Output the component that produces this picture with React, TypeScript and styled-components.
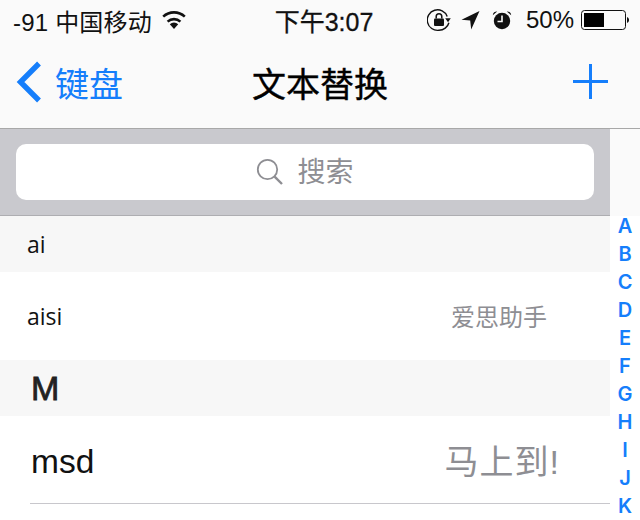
import React from 'react';
import styled, { createGlobalStyle } from 'styled-components';

const GlobalStyle = createGlobalStyle`
  html, body {
    margin: 0;
    padding: 0;
    background: #fff;
    overflow: hidden;
  }
  * {
    box-sizing: border-box;
  }
`;

const FONT = `"Liberation Sans", "Noto Sans CJK SC", sans-serif`;
const BLUE = '#157efb';

const Page = styled.div`
  width: 640px;
  height: 520px;
  overflow: hidden;
  font-family: ${FONT};
  background: #fff;
`;

const Header = styled.header`
  height: 129px;
  background: #fafafa;
  border-bottom: 1px solid #a8a8a8;
`;

const StatusBar = styled.div`
  height: 40px;
  padding: 0 11px 0 13px;
  display: grid;
  grid-template-columns: 1fr auto 1fr;
  align-items: center;
  font-size: 24px;
  color: #111;
`;

const StatusLeft = styled.div`
  display: flex;
  align-items: center;
  gap: 9px;
  letter-spacing: 0.2px;
`;

const StatusTime = styled.div`
  font-size: 25px;
  margin-left: 6px;
  -webkit-text-stroke: 0.3px #111;
`;

const StatusRight = styled.div`
  display: flex;
  align-items: center;
  justify-content: flex-end;
`;

const StatusIcon = styled.svg<{ $gap: number }>`
  display: block;
  margin-right: ${props => props.$gap}px;
`;

const Percent = styled.span`
  margin-right: 7px;
`;

const NavBar = styled.div`
  height: 88px;
  padding: 0 32px 4px 32px;
  display: grid;
  grid-template-columns: 1fr auto 1fr;
  align-items: center;
`;

const BackLink = styled.div`
  display: flex;
  align-items: center;
  gap: 13px;
  margin-left: -16px;
  color: ${BLUE};
  font-size: 34px;
`;

const NavTitle = styled.div`
  font-size: 34px;
  color: #000;
  -webkit-text-stroke: 0.4px #000;
`;

const AddButton = styled.svg`
  display: block;
  justify-self: end;
  margin-bottom: 2px;
`;

const Body = styled.div`
  display: flex;
  align-items: flex-start;
`;

const Content = styled.main`
  width: 610px;
  flex: none;
`;

const SearchBar = styled.div`
  height: 87px;
  padding: 15px 16px 15px;
  background: #c9c9ce;
  border-bottom: 1px solid #aeaeb2;
`;

const SearchField = styled.div`
  height: 56px;
  width: 578px;
  background: #fff;
  border-radius: 10px;
  display: flex;
  align-items: center;
  justify-content: center;
  gap: 13px;
  color: #8e8e93;
  font-size: 28px;
`;

const SearchLabel = styled.span`
  margin-bottom: 4px;
`;

const SectionHeader = styled.div<{ $big?: boolean }>`
  height: 56px;
  padding-left: ${props => (props.$big ? 31 : 27)}px;
  background: #f7f7f7;
  display: flex;
  align-items: center;
  color: ${props => (props.$big ? '#222' : '#111')};
  font-family: ${props => (props.$big ? FONT : `"Open Sans", "Noto Sans", sans-serif`)};
  font-size: ${props => (props.$big ? 34 : 23)}px;
  -webkit-text-stroke: ${props => (props.$big ? '0.8px #222' : '0')};
`;

const Row = styled.div<{ $small?: boolean }>`
  height: ${props => (props.$small ? 88 : 87)}px;
  padding-left: ${props => (props.$small ? 27 : 31)}px;
  padding-right: ${props => (props.$small ? 63 : 50)}px;
  display: flex;
  align-items: center;
  justify-content: space-between;
`;

const RowKey = styled.span<{ $small?: boolean }>`
  font-family: ${props => (props.$small ? `"Open Sans", "Noto Sans", sans-serif` : FONT)};
  font-size: ${props => (props.$small ? 23 : 33.5)}px;
  margin-top: ${props => (props.$small ? 0 : 4)}px;
  color: #111;
`;

const RowValue = styled.span<{ $small?: boolean }>`
  font-size: ${props => (props.$small ? 24 : 34)}px;
  letter-spacing: ${props => (props.$small ? 0 : 1)}px;
  margin-bottom: ${props => (props.$small ? 2 : 0)}px;
  color: #8e8e93;
`;

const Divider = styled.div`
  height: 1px;
  margin-left: 30px;
  background: #c8c7cc;
`;

const IndexColumn = styled.nav`
  width: 30px;
  flex: none;
  display: flex;
  flex-direction: column;
  align-items: center;
`;

const IndexHeader = styled.div`
  width: 100%;
  height: 87px;
  background: #fafafa;
`;

const IndexLetter = styled.span`
  height: 28px;
  line-height: 20px;
  font-family: Inter, "Liberation Sans", sans-serif;
  font-size: 20px;
  font-weight: 600;
  color: ${BLUE};
`;

const INDEX_LETTERS = ['A', 'B', 'C', 'D', 'E', 'F', 'G', 'H', 'I', 'J', 'K'];

const WifiIcon = () => (
  <StatusIcon $gap={0} width="26" height="20" viewBox="0 0 26 20">
    <path d="M13 19l-4.2-4.8a6.3 6.3 0 0 1 8.4 0z" fill="#111" />
    <path d="M6.6 11.6a9.6 9.6 0 0 1 12.8 0" fill="none" stroke="#111" strokeWidth="2.6" />
    <path d="M2.2 6.6a16 16 0 0 1 21.6 0" fill="none" stroke="#111" strokeWidth="2.6" />
  </StatusIcon>
);

const RotationLockIcon = () => (
  <StatusIcon $gap={10} width="24" height="24" viewBox="0 0 24 24">
    <path d="M20.2 8.4A10.3 10.3 0 1 0 12 22.3a10.3 10.3 0 0 0 9.9-7.6" fill="none" stroke="#111" strokeWidth="1.4" />
    <path d="M18.2 10.2h5.6l-2.8 4z" fill="#111" />
    <rect x="7" y="10.5" width="10" height="7.5" rx="1" fill="#111" />
    <path d="M9.2 10.5V8.6a2.8 2.8 0 0 1 5.6 0v1.9" fill="none" stroke="#111" strokeWidth="1.5" />
  </StatusIcon>
);

const LocationIcon = () => (
  <StatusIcon $gap={12} width="19" height="20" viewBox="0 0 19 20">
    <path d="M18.5 1L0.5 9.8l8.7.6 1 9.1z" fill="#111" />
  </StatusIcon>
);

const AlarmIcon = () => (
  <StatusIcon $gap={14} width="20" height="20" viewBox="0 0 20 20">
    <circle cx="10" cy="11" r="8.2" fill="#111" />
    <path d="M0.8 5.2a4 4 0 0 1 4.4-3.8zM19.2 5.2a4 4 0 0 0-4.4-3.8z" fill="#111" />
    <path d="M10 5.5V11.5H5.5" fill="none" stroke="#fafafa" strokeWidth="1.6" />
  </StatusIcon>
);

const BatteryIcon = () => (
  <svg width="48" height="20" viewBox="0 0 48 20">
    <rect x="0.5" y="0.5" width="44" height="19" rx="3" fill="none" stroke="#111" />
    <rect x="3" y="3" width="20" height="14" fill="#000" />
    <path d="M46 7a3 3 0 0 1 2 3 3 3 0 0 1-2 3z" fill="#111" />
  </svg>
);

const App = () => {
  return (
    <Page>
      <GlobalStyle />
      <Header>
        <StatusBar>
          <StatusLeft>
            <span>-91 中国移动</span>
            <WifiIcon />
          </StatusLeft>
          <StatusTime>下午3:07</StatusTime>
          <StatusRight>
            <RotationLockIcon />
            <LocationIcon />
            <AlarmIcon />
            <Percent>50%</Percent>
            <BatteryIcon />
          </StatusRight>
        </StatusBar>
        <NavBar>
          <BackLink>
            <svg width="26" height="42" viewBox="0 0 26 42">
              <path d="M23 2.5L4.5 21 23 39.5" fill="none" stroke={BLUE} strokeWidth="5.4" />
            </svg>
            <span>键盘</span>
          </BackLink>
          <NavTitle>文本替换</NavTitle>
          <AddButton width="35" height="35" viewBox="0 0 35 35">
            <path d="M17.5 0v35M0 17.5h35" stroke={BLUE} strokeWidth="3" fill="none" />
          </AddButton>
        </NavBar>
      </Header>
      <Body>
        <Content>
          <SearchBar>
            <SearchField>
              <svg width="28" height="28" viewBox="0 0 28 28">
                <circle cx="11.5" cy="11.5" r="9.7" fill="none" stroke="#8e8e93" strokeWidth="1.8" />
                <path d="M18.6 18.6L26 26" stroke="#8e8e93" strokeWidth="2.4" fill="none" />
              </svg>
              <SearchLabel>搜索</SearchLabel>
            </SearchField>
          </SearchBar>
          <SectionHeader>ai</SectionHeader>
          <Row $small>
            <RowKey $small>aisi</RowKey>
            <RowValue $small>爱思助手</RowValue>
          </Row>
          <SectionHeader $big>M</SectionHeader>
          <Row>
            <RowKey>msd</RowKey>
            <RowValue>马上到!</RowValue>
          </Row>
          <Divider />
        </Content>
        <IndexColumn>
          <IndexHeader />
          {INDEX_LETTERS.map(letter => (
            <IndexLetter key={letter}>{letter}</IndexLetter>
          ))}
        </IndexColumn>
      </Body>
    </Page>
  );
};

export default App;
